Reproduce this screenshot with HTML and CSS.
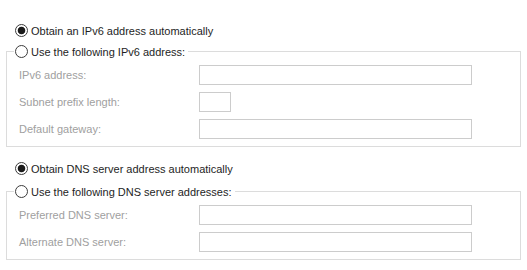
FILE: index.html
```html
<!DOCTYPE html>
<html>
<head>
<meta charset="utf-8">
<title>IPv6 Properties</title>
<link rel="stylesheet" href="styles.css">
</head>
<body>
<div class="panel">
  <label class="opt"><input type="radio" name="ip" checked><span>Obtain an IPv6 address automatically</span></label>
  <fieldset class="group">
    <legend><label class="opt"><input type="radio" name="ip"><span>Use the following IPv6 address:</span></label></legend>
    <div class="rows">
      <div class="row"><span class="lbl">IPv6 address:</span><span class="box wide"></span></div>
      <div class="row"><span class="lbl">Subnet prefix length:</span><span class="box small"></span></div>
      <div class="row"><span class="lbl">Default gateway:</span><span class="box wide"></span></div>
    </div>
  </fieldset>

  <label class="opt second"><input type="radio" name="dns" checked><span>Obtain DNS server address automatically</span></label>
  <fieldset class="group dns">
    <legend><label class="opt"><input type="radio" name="dns"><span>Use the following DNS server addresses:</span></label></legend>
    <div class="rows">
      <div class="row"><span class="lbl">Preferred DNS server:</span><span class="box wide"></span></div>
      <div class="row"><span class="lbl">Alternate DNS server:</span><span class="box wide"></span></div>
    </div>
  </fieldset>
</div>
</body>
</html>
```

FILE: styles.css
```css
html, body {
  margin: 0;
  background: #ffffff;
}

body {
  font-family: "Liberation Sans", Arial, sans-serif;
  font-size: 11px;
  color: #1e1e1e;
}

.panel {
  padding-top: 24px;
}

.opt {
  display: flex;
  align-items: center;
  gap: 3px;
  height: 13px;
  margin-left: 15px;
  white-space: nowrap;
}

.opt input {
  -webkit-appearance: none;
  appearance: none;
  box-sizing: border-box;
  width: 13px;
  height: 13px;
  margin: 0;
  border: 1px solid #3c3c3c;
  border-radius: 50%;
  background: #ffffff;
  flex: none;
}

.opt input:checked {
  background: radial-gradient(circle, #1a1a1a 0 3.4px, #ffffff 4.2px);
}

.opt.second {
  margin-top: 15px;
}

.group {
  margin: 8px 6px 0 6px;
  padding: 7px 12px 7px 12px;
  border: 1px solid #dcdcdc;
  min-width: 0;
}

.group.dns {
  margin-top: 10px;
}

.group legend {
  margin-left: -5px;
  padding: 0 3px 0 1px;
  height: 13px;
}

.group legend .opt {
  margin-left: 0;
}

.rows {
  display: flex;
  flex-direction: column;
  gap: 7px;
}

.row {
  display: flex;
  align-items: center;
}

.lbl {
  width: 180px;
  color: #a0a0a0;
  white-space: nowrap;
}

.box {
  box-sizing: border-box;
  height: 20px;
  border: 1px solid #cccccc;
  background: #ffffff;
}

.box.wide {
  width: 273px;
}

.box.small {
  width: 32px;
}
```
